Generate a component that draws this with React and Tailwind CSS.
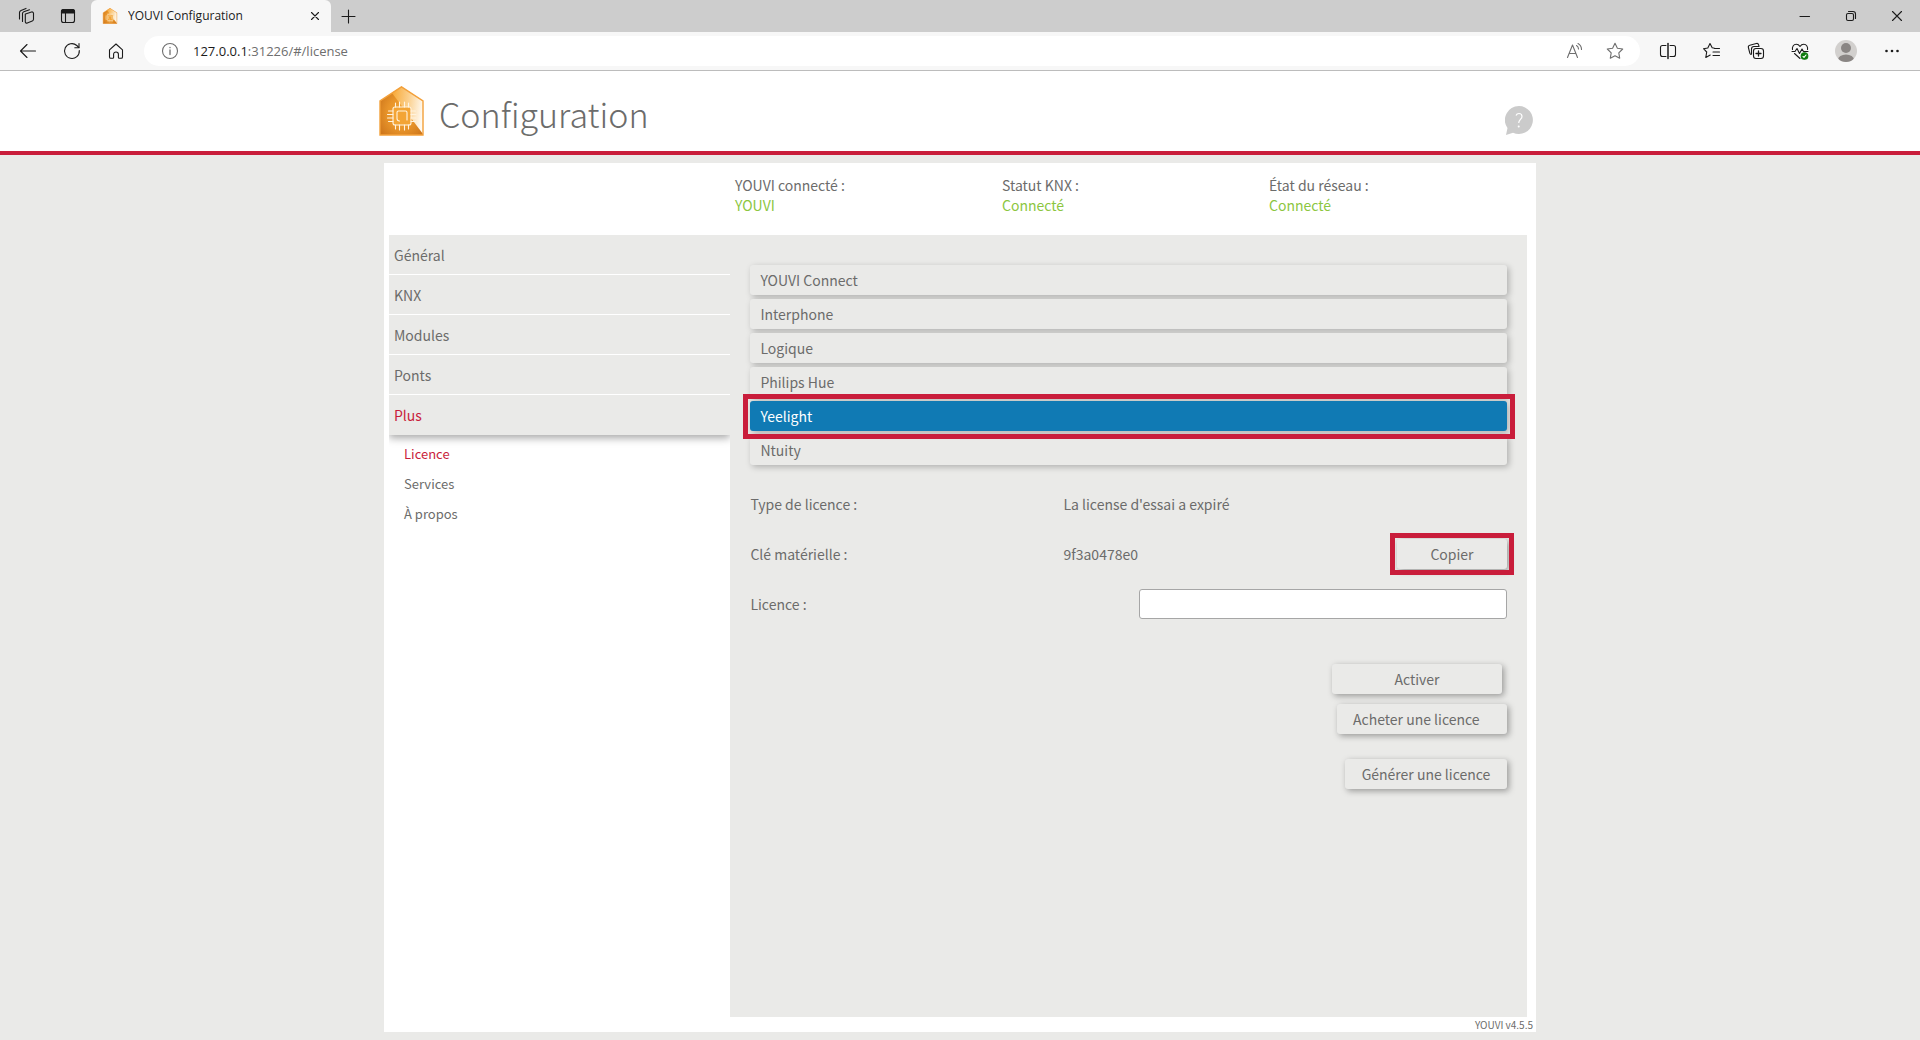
import React, { useState } from 'react';

const MENU = ['Général', 'KNX', 'Modules', 'Ponts', 'Plus'];
const SUBMENU = ['Licence', 'Services', 'À propos'];
const LICENSES = ['YOUVI Connect', 'Interphone', 'Logique', 'Philips Hue', 'Yeelight', 'Ntuity'];
const STATUS = [
    { label: 'YOUVI connecté :', value: 'YOUVI' },
    { label: 'Statut KNX :', value: 'Connecté' },
    { label: 'État du réseau :', value: 'Connecté' },
];

const Icon = ({ size = 20, className = '', children }) => (
    <svg
        width={size}
        height={size}
        viewBox={`0 0 ${size} ${size}`}
        fill="none"
        stroke="currentColor"
        strokeWidth="1.1"
        strokeLinecap="round"
        strokeLinejoin="round"
        className={className}
        aria-hidden="true"
    >
        {children}
    </svg>
);

const BarButton = ({ label, className = 'w-11', children }) => (
    <button type="button" aria-label={label} className={`flex h-full shrink-0 items-center justify-center ${className}`}>
        {children}
    </button>
);

const HouseLogo = ({ id, className }) => (
    <svg viewBox="0 0 45 50" className={className} aria-hidden="true">
        <defs>
            <radialGradient id={`${id}-base`} cx="0.5" cy="0.55" r="0.65">
                <stop offset="0" stopColor="#f6a733" />
                <stop offset="0.5" stopColor="#e8942a" />
                <stop offset="1" stopColor="#cc741a" />
            </radialGradient>
            <linearGradient id={`${id}-shine`} x1="0" y1="0.3" x2="1" y2="0.5">
                <stop offset="0" stopColor="#f8ab3b" />
                <stop offset="0.5" stopColor="#fbcf8c" />
                <stop offset="1" stopColor="#fffaf2" />
            </linearGradient>
        </defs>
        <path d="M22.500 0.800 44 15v34H1V15z" fill={`url(#${id}-base)`} />
        <path d="M13 7 22.500 0.800 44 15v33z" fill={`url(#${id}-shine)`} />
        <path d="M22.500 0.800 44 15v34H1V15z" fill="none" stroke="#f3a03a" strokeWidth="1.400" />
        <rect x="14" y="21" width="18" height="18" rx="2" fill="#f3a435" />
        <g fill="none" stroke="#fff3df" strokeWidth="1.100" strokeLinecap="round">
            <rect x="14" y="21" width="18" height="18" rx="2" />
            <path d="M16.500 21v-4M20.500 21v-5M25.500 21v-5M29.500 21v-4M16.500 39v4M20.500 39v5M25.500 39v5M29.500 39v4" />
            <path d="M14 25H9.500M14 28.500H8.500M14 32H8.500M14 35.500H9.500M32 25h4.500M32 28.500h5M32 32h5M32 35.500h4.500" />
            <path d="M20.500 35c-1.500 0-2.500-1-2.500-2.500v-6c0-1 .5-1.500 1.500-1.500h7c1 0 1.500.5 1.500 1.500V34" />
        </g>
    </svg>
);

const TabStrip = () => (
    <div className="flex h-8 items-stretch bg-[#cdcdcd] pl-[5px] text-[#1b1b1b]">
        <BarButton label="Espaces de travail" className="w-[42px]">
            <Icon size={18}>
                <path d="M8.500 6.500 14.500 4.500c1-.3 2 .3 2 1.300v6c0 .8-.4 1.400-1.200 1.700l-5 2c-1 .4-2-.2-2-1.300V6.500z" transform="translate(0 .5)" />
                <path d="M5.500 14.500V6.500c0-1 .5-1.500 1.300-1.800l5.700-2" />
                <path d="M2.500 12V5.500C2.500 4.500 3 3.800 4 3.400l5-2" />
            </Icon>
        </BarButton>
        <BarButton label="Onglets verticaux" className="w-[42px]">
            <Icon size={16}>
                <rect x="1.500" y="1.500" width="13" height="13" rx="2" />
                <path d="M1.500 3.500c0-1.200.8-2 2-2h9c1.200 0 2 .8 2 2V5h-13z" fill="currentColor" />
                <path d="M5.500 5v9.500" />
            </Icon>
        </BarButton>
        <div className="ml-0.5 flex w-60 items-center rounded-t-md bg-[#f7f7f7] pl-[11px]">
            <HouseLogo id="favicon" className="h-4 w-4" />
            <span className="ml-2.5 flex-1 truncate text-xs text-[#1b1b1b]">YOUVI Configuration</span>
            <BarButton label="Fermer l'onglet" className="w-8">
                <Icon size={10}>
                    <path d="M1.500 1.500l7 7M8.500 1.500l-7 7" />
                </Icon>
            </BarButton>
        </div>
        <BarButton label="Nouvel onglet" className="w-[34px]">
            <Icon size={16}>
                <path d="M8.500 2v13M2 8.500h13" />
            </Icon>
        </BarButton>
        <div className="flex-1" />
        <BarButton label="Réduire" className="w-[46px]">
            <Icon size={12}>
                <path d="M1 6.500h9.500" />
            </Icon>
        </BarButton>
        <BarButton label="Restaurer" className="w-[46px]">
            <Icon size={12}>
                <rect x="1.500" y="3.500" width="7" height="7" rx="1.500" />
                <path d="M3.500 1.500H8c1.500 0 2.500 1 2.500 2.500v4.500" />
            </Icon>
        </BarButton>
        <BarButton label="Fermer" className="w-[46px]">
            <Icon size={12}>
                <path d="M1.500 1.500l9 9M10.500 1.500l-9 9" />
            </Icon>
        </BarButton>
    </div>
);

const AddressBar = () => (
    <div className="flex h-[39px] items-center border-b border-[#bcbcbc] bg-[#f7f7f7] px-1.5 text-[#1b1b1b]">
        <BarButton label="Précédent">
            <Icon>
                <path d="M17.500 10H2.500M9 3.500 2.500 10 9 16.500" />
            </Icon>
        </BarButton>
        <BarButton label="Actualiser">
            <Icon>
                <path d="M17.300 9.500A7.400 7.400 0 1 1 14.800 4.500L16.800 6.500" />
                <path d="M17 2.500v4.200h-4.200" />
            </Icon>
        </BarButton>
        <BarButton label="Accueil">
            <Icon>
                <path d="M3.500 8.800 10 3l6.500 5.800V16c0 .8-.4 1.300-1.200 1.300h-2.100c-.5 0-.8-.3-.8-.8v-3.200c0-1.400-1-2.300-2.400-2.300s-2.400.9-2.400 2.300v3.200c0 .5-.3.8-.8.8H4.700c-.8 0-1.200-.5-1.200-1.300z" />
            </Icon>
        </BarButton>
        <div className="mx-1.5 flex h-[30px] flex-1 items-center rounded-full bg-white pr-[5px] pl-4 text-[#6e6e6e]">
            <Icon>
                <circle cx="10" cy="10" r="7.500" />
                <path d="M10 9v4.500M10 6.500v.2" strokeWidth="1.300" />
            </Icon>
            <div
                role="textbox"
                aria-label="Adresse"
                contentEditable
                suppressContentEditableWarning
                className="ml-[13px] flex-1 text-[13px] outline-none"
            >
                <span className="text-[#1b1b1b]">127.0.0.1</span>:31226/#/license
            </div>
            <BarButton label="Lecture à voix haute" className="w-10">
                <Icon>
                    <path d="M2.500 16.500 7.500 4l5 12.500M4.300 12.500h6.400" />
                    <path d="M11.500 4.500c1.300.8 2 2 2 3.500M13 2.500c2.200 1.200 3.500 3.200 3.500 6" />
                </Icon>
            </BarButton>
            <BarButton label="Ajouter aux favoris" className="w-10">
                <Icon>
                    <path d="M10 2.300l2.400 4.900 5.300.8-3.900 3.800.9 5.400-4.700-2.500-4.700 2.500.9-5.400L2.300 8l5.300-.8z" />
                </Icon>
            </BarButton>
        </div>
        <BarButton label="Écran partagé">
            <Icon>
                <path d="M8 4.500H4.500c-1.200 0-2 .8-2 2v7c0 1.200.8 2 2 2H8M12 4.500h3.500c1.200 0 2 .8 2 2v7c0 1.200-.8 2-2 2H12" />
                <path d="M10 2.500v15" strokeWidth="1.500" />
            </Icon>
        </BarButton>
        <BarButton label="Favoris">
            <Icon>
                <path d="M12.500 7.200 10.200 6.800 8 2.500 5.800 7l-4.300.7 3.200 3.300-.9 5.500 4.400-2.500" />
                <path d="M12.500 7.500h5M11 11h6.500M11 14.500h6.500" />
            </Icon>
        </BarButton>
        <BarButton label="Collections">
            <Icon>
                <path d="M5 13.500c-.7-.2-1-.6-1.200-1.300L2.400 6.500C2.100 5.300 2.600 4.500 3.800 4.200l6.500-1.700c1.200-.3 2 .2 2.300 1.300l.3 1.200" />
                <rect x="7.500" y="7.500" width="10" height="10" rx="2.500" />
                <path d="M5.500 13V8c0-1.500 1-2.500 2.500-2.500h5" />
                <path d="M12.500 10v5M10 12.500h5" strokeWidth="1.300" />
            </Icon>
        </BarButton>
        <BarButton label="Performances du navigateur">
            <Icon>
                <path d="M2.500 8.500c-.6-2.500 1-5.200 3.700-5.200 1.700 0 3 1 3.800 2.200.8-1.200 2.100-2.200 3.800-2.200 2.700 0 4.300 2.700 3.700 5.200" />
                <path d="M2 10.500h3l2-3 2.500 5L12 8l1.500 2.500H18M4.500 12.500 10 17.500" />
                <circle cx="14.500" cy="15" r="3.300" fill="#107c10" stroke="#107c10" />
                <path d="M13 15.500l1 .8 2-2.300" stroke="#fff" />
            </Icon>
        </BarButton>
        <BarButton label="Profil" className="mx-0.5 w-11">
            <svg width="22" height="22" viewBox="0 0 22 22" aria-hidden="true">
                <defs>
                    <clipPath id="avatar">
                        <circle cx="11" cy="11" r="11" />
                    </clipPath>
                </defs>
                <g clipPath="url(#avatar)">
                    <rect width="22" height="22" fill="#d2d0ce" />
                    <g fill="#8a8684">
                        <circle cx="11" cy="8" r="5" />
                        <ellipse cx="11" cy="20" rx="8" ry="5.500" />
                    </g>
                </g>
            </svg>
        </BarButton>
        <BarButton label="Paramètres et plus">
            <Icon>
                <g fill="currentColor" stroke="none">
                    <circle cx="4.500" cy="10" r="1.300" />
                    <circle cx="10" cy="10" r="1.300" />
                    <circle cx="15.500" cy="10" r="1.300" />
                </g>
            </Icon>
        </BarButton>
    </div>
);

const Header = () => (
    <header className="border-b-4 border-[#c91d3b] bg-white">
        <div className="mx-auto flex h-20 w-[60%] items-center justify-between pr-[3px]">
            <div className="-ml-[5px] flex items-center">
                <HouseLogo id="logo" className="h-[50px] w-[45px]" />
                <h1 className="ml-[15px] pt-1.5 text-[34px] leading-[50px] font-light">Configuration</h1>
            </div>
            <button type="button" aria-label="Aide" className="mt-[18px]">
                <svg width="28" height="29" viewBox="0 0 28 29" aria-hidden="true">
                    <path d="M14 0a14 14 0 1 1-6 26.700L1 29l1.500-7A14 14 0 0 1 14 0z" fill="#cbcbcb" />
                    <path d="M11 9.500c.5-1.300 1.600-2 3-2 1.800 0 3 1.100 3 2.900 0 2.800-3.300 3.400-3.300 6.600" fill="none" stroke="#fff" strokeWidth="1.200" />
                    <circle cx="13.700" cy="20.500" r="1" fill="#fff" />
                </svg>
            </button>
        </div>
    </header>
);

const StatusBar = () => (
    <div className="flex h-[72px] pt-3 pl-[351px]">
        {STATUS.map((s) => (
            <div key={s.label} className="w-[267px] leading-5">
                <div>{s.label}</div>
                <div className="text-[#8cc63f]">{s.value}</div>
            </div>
        ))}
    </div>
);

const Sidebar = () => (
    <nav className="w-[30%] shrink-0 overflow-hidden bg-white">
        <ul className="bg-[#eaeae8] shadow-[0_3px_8px_rgba(0,0,0,0.35)]">
            {MENU.map((item) => (
                <li key={item} className="h-10 border-b border-white last:border-b-0">
                    <a href={`#/${item}`} className={`flex h-full items-center px-[5px] ${item === 'Plus' ? 'text-[#c91d3b]' : ''}`}>
                        {item}
                    </a>
                </li>
            ))}
        </ul>
        <ul className="pt-1 pl-[15px] text-[13px]">
            {SUBMENU.map((item) => (
                <li key={item}>
                    <a href={`#/${item}`} className={`flex h-[30px] items-center ${item === 'Licence' ? 'text-[#c91d3b]' : ''}`}>
                        {item}
                    </a>
                </li>
            ))}
        </ul>
    </nav>
);

const RaisedButton = ({ className = '', children }) => (
    <button type="button" className={`h-[30px] rounded-[3px] bg-[#eaeae8] px-4 shadow-[2px_2px_6px_rgba(0,0,0,0.35)] ${className}`}>
        {children}
    </button>
);

// Red frame drawn around the control it is placed in
const Highlight = ({ className }) => (
    <span className={`pointer-events-none absolute border-[5px] border-[#c91d3b] ${className}`} />
);

const LicensePage = () => {
    const [selected, setSelected] = useState('Yeelight');
    const [licenseKey, setLicenseKey] = useState('');

    return (
        <main className="flex-1 bg-[#eaeae8] px-5 pt-[30px]">
            <ul className="space-y-1">
                {LICENSES.map((name) => (
                    <li key={name} className={`relative ${name === 'Yeelight' ? 'z-10' : ''}`}>
                        <button
                            type="button"
                            onClick={() => setSelected(name)}
                            className={`block h-[30px] w-full rounded-[3px] px-2.5 text-left shadow-[2px_2px_6px_rgba(0,0,0,0.25)] ${
                                selected === name ? 'bg-[#107ab4] text-white' : 'bg-[#eaeae8]'
                            }`}
                        >
                            {name}
                        </button>
                        {name === 'Yeelight' && <Highlight className="-top-[7px] -right-2 -bottom-2 -left-[7px]" />}
                    </li>
                ))}
            </ul>

            <dl className="mt-[14px]">
                <div className="flex h-[50px] items-center">
                    <dt className="w-[313px]">Type de licence :</dt>
                    <dd>La license d'essai a expiré</dd>
                </div>
                <div className="flex h-[50px] items-center">
                    <dt className="w-[313px]">Clé matérielle :</dt>
                    <dd className="flex flex-1 items-center justify-between">
                        9f3a0478e0
                        <span className="relative">
                            <RaisedButton className="block w-[110px]">Copier</RaisedButton>
                            <Highlight className="-inset-x-[7px] -inset-y-1.5" />
                        </span>
                    </dd>
                </div>
            </dl>
            <div className="flex h-[50px] items-center justify-between">
                <label htmlFor="license-key">Licence :</label>
                <input
                    id="license-key"
                    type="text"
                    value={licenseKey}
                    onChange={(e) => setLicenseKey(e.target.value)}
                    className="h-[30px] w-[368px] rounded-[3px] border border-[#a6a6a6] bg-white px-2 outline-none"
                />
            </div>

            <div className="mt-[35px] flex flex-col items-end">
                <RaisedButton className="mr-[5px] w-[170px]">Activer</RaisedButton>
                <RaisedButton className="mt-2.5 w-[170px] text-left">Acheter une licence</RaisedButton>
                <RaisedButton className="mt-[25px] w-[162px]">Générer une licence</RaisedButton>
            </div>
        </main>
    );
};

const App = () => (
    <div className="flex min-h-screen flex-col bg-[#eaeae8] font-['Noto_Sans_CJK_SC',sans-serif] text-sm text-[#6c6c6b]">
        <div className="font-['Open_Sans',sans-serif]">
            <TabStrip />
            <AddressBar />
        </div>
        <Header />
        <div className="mx-auto my-2 flex w-[60%] flex-1 flex-col bg-white">
            <StatusBar />
            <div className="mr-[9px] ml-[5px] flex flex-1">
                <Sidebar />
                <LicensePage />
            </div>
            <footer className="h-[15px] pr-[3px] text-right text-[10px] leading-[15px]">YOUVI v4.5.5</footer>
        </div>
    </div>
);

export default App;
